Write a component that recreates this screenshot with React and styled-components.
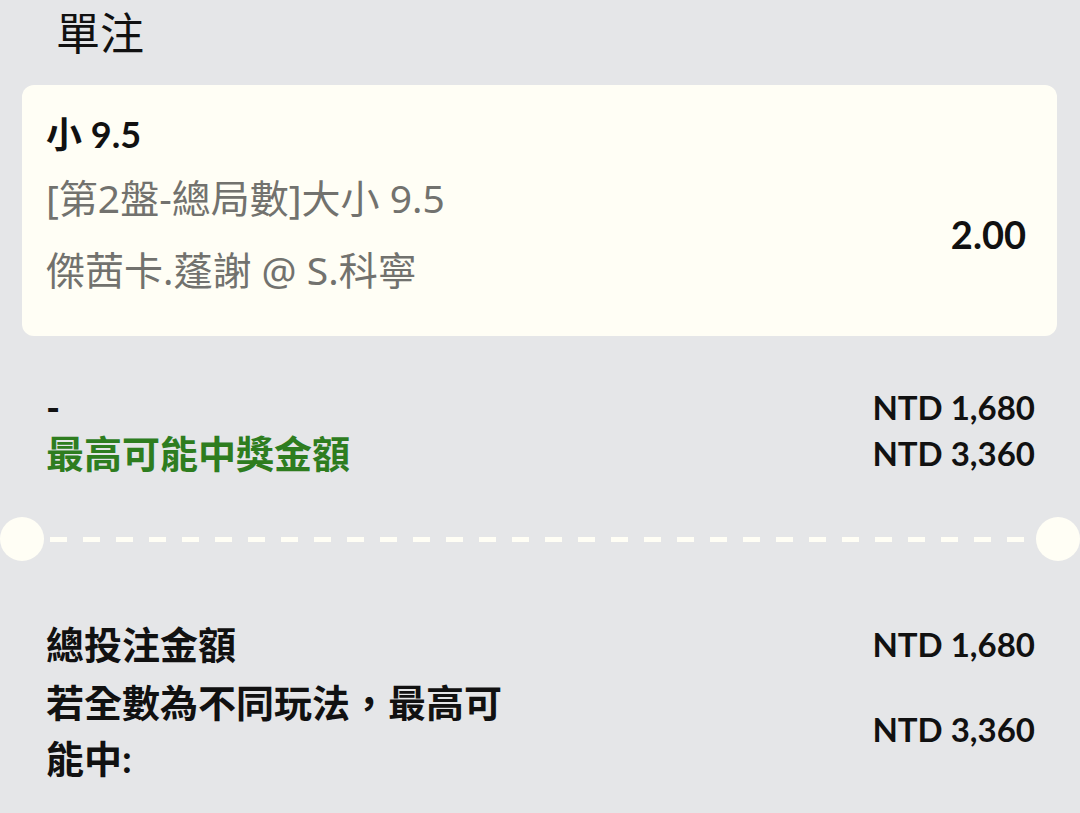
import React from 'react';
import styled, { createGlobalStyle } from 'styled-components';

const GlobalStyle = createGlobalStyle`
  html, body {
    margin: 0;
    padding: 0;
    background: #e5e6e8;
  }
  body {
    font-family: Lato, "Noto Sans CJK TC", sans-serif;
    color: #111;
  }
`;

const Page = styled.div`
  width: 1080px;
  min-height: 813px;
  background: #e5e6e8;
  overflow: hidden;
`;

const Title = styled.div`
  padding-left: 56px;
  font-family: "Noto Sans CJK TC", sans-serif;
  font-size: 44px;
  line-height: 62px;
  color: #111;
  margin-bottom: 23px;
`;

const Card = styled.div`
  margin: 0 23px 0 22px;
  background: #fffef5;
  border-radius: 12px;
  padding: 24px 31px 41px 24px;
  display: grid;
  grid-template-columns: 1fr auto;
  align-items: center;
`;

const Selection = styled.div`
  grid-column: 1 / -1;
  font-family: Lato, "Noto Sans CJK TC", sans-serif;
  font-weight: 700;
  font-size: 36px;
  line-height: 50px;
  margin-bottom: 14px;
`;

const Details = styled.div`
  display: flex;
  flex-direction: column;
  gap: 22px;
`;

const Detail = styled.div`
  font-family: "Noto Sans", "Noto Sans CJK TC", sans-serif;
  font-weight: 400;
  font-size: 39px;
  line-height: 50px;
  color: #72726e;
`;

const Odds = styled.div`
  font-family: Lato, sans-serif;
  font-weight: 700;
  font-size: 38px;
  line-height: 50px;
  text-align: right;
`;

const Summary = styled.div`
  display: grid;
  grid-template-columns: ${p => p.$labelWidth || '1fr'} 1fr;
  align-items: center;
  padding: ${p => p.$pad};
`;

const Labels = styled.div`
  display: flex;
  flex-direction: column;
`;

const Label = styled.div`
  font-family: Lato, "Noto Sans CJK TC", sans-serif;
  font-weight: 700;
  font-size: 38px;
  line-height: ${p => p.$lh || '46px'};
  color: ${p => (p.$green ? '#2e7d1f' : '#111')};
  margin-bottom: ${p => p.$gap || '0'};
`;

const Amounts = styled.div`
  display: flex;
  flex-direction: column;
  align-items: flex-end;
  align-self: stretch;
`;

const Amount = styled.div`
  font-family: Lato, sans-serif;
  font-weight: 700;
  font-size: 33px;
  line-height: ${p => p.$lh || '46px'};
  flex: ${p => p.$flex || 'none'};
  display: flex;
  align-items: center;
`;

const Divider = styled.div`
  position: relative;
  height: 44px;
  margin: 41px 22px 0 22px;
  display: flex;
  align-items: center;
`;

const Dashes = styled.div`
  flex: 1;
  height: 5px;
  margin: 0 0 0 28px;
  background: repeating-linear-gradient(
    to right,
    #fffef5 0,
    #fffef5 17px,
    transparent 17px,
    transparent 33px
  );
`;

const Notch = styled.div`
  position: absolute;
  top: 0;
  width: 44px;
  height: 44px;
  border-radius: 50%;
  background: #fffef5;
  ${p => (p.$side === 'left' ? 'left: -22px;' : 'right: -22px;')}
`;

export default function App() {
  return (
    <Page>
      <GlobalStyle />
      <Title>單注</Title>
      <Card>
        <Selection>小 9.5</Selection>
        <Details>
          <Detail>[第2盤-總局數]大小 9.5</Detail>
          <Detail>傑茜卡.蓬謝 @ S.科寧</Detail>
        </Details>
        <Odds>2.00</Odds>
      </Card>

      <Summary $pad="48px 45px 0 46px">
        <Labels>
          <Label>-</Label>
          <Label $green>最高可能中獎金額</Label>
        </Labels>
        <Amounts>
          <Amount>NTD 1,680</Amount>
          <Amount>NTD 3,360</Amount>
        </Amounts>
      </Summary>

      <Divider>
        <Notch $side="left" />
        <Dashes />
        <Notch $side="right" />
      </Divider>

      <Summary $pad="55px 45px 0 46px" $labelWidth="480px">
        <Labels>
          <Label $lh="56px" $gap="2px">總投注金額</Label>
          <Label $lh="56px">若全數為不同玩法，最高可能中:</Label>
        </Labels>
        <Amounts>
          <Amount $lh="56px">NTD 1,680</Amount>
          <Amount $flex="1">NTD 3,360</Amount>
        </Amounts>
      </Summary>
    </Page>
  );
}
